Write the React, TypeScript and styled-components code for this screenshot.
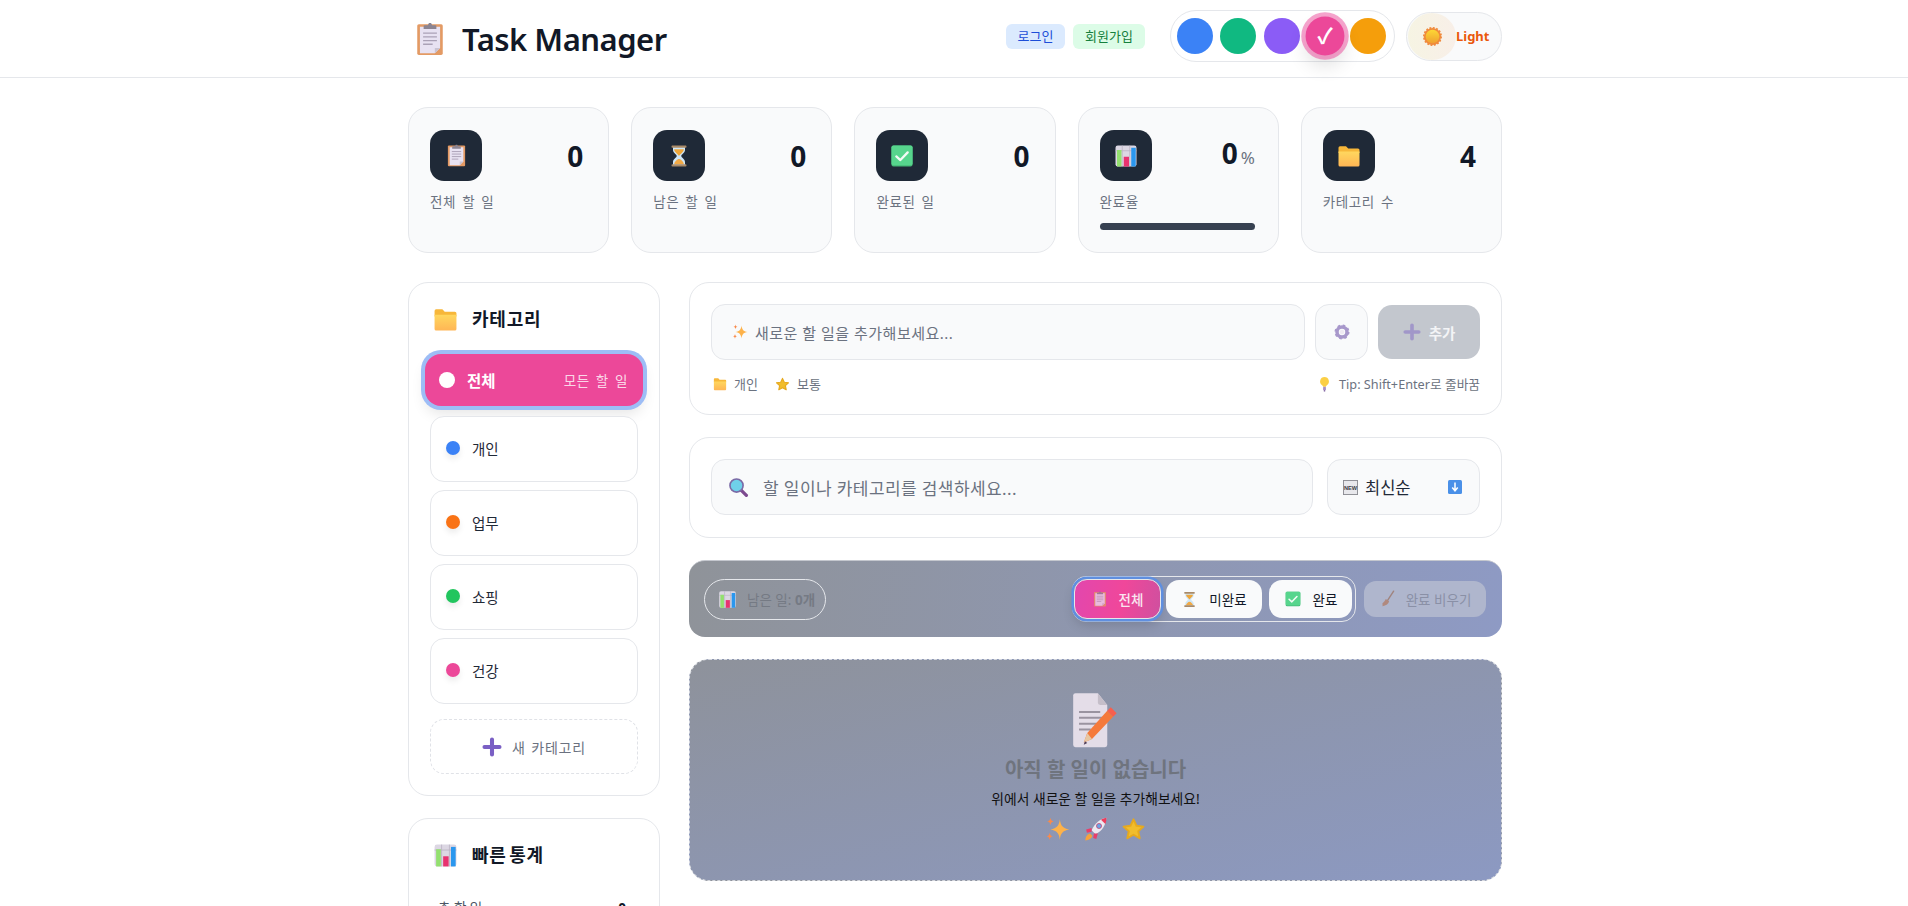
import React from "react";
import styled, { createGlobalStyle } from "styled-components";

const GlobalStyle = createGlobalStyle`
  html, body {
    margin: 0;
    height: 906px;
    overflow: hidden;
    background: #ffffff;
  }
  body {
    font-family: "Noto Sans", "Noto Sans CJK KR", sans-serif;
    color: #111827;
  }
  * { box-sizing: border-box; }
`;

type IconName =
  | "clipboard" | "hourglass" | "check" | "chart" | "folder" | "sun" | "plus" | "gear"
  | "sparkle" | "star" | "bulb" | "search" | "fresh" | "down" | "broom" | "memo" | "rocket";

const shapes: Record<IconName, React.ReactNode> = {
  clipboard: (
    <>
      <rect x="4" y="2" width="24" height="29" rx="1.5" fill="#e39a64" />
      <path d="M6.500 4.500h19v20l-5 5h-14z" fill="#e8e2f2" />
      <path d="M25.500 24.500h-5v5z" fill="#c9c3d2" />
      <path d="M11 3h3l1-2h2l1 2h3a1 1 0 0 1 1 1v2.500H10V4a1 1 0 0 1 1-1z" fill="#8b8492" />
      <path d="M9.500 10.500h13M9.500 14h13M9.500 17.500h13M9.500 21h9" stroke="#aaa1b6" strokeWidth="1.300" />
    </>
  ),
  hourglass: (
    <>
      <path d="M8 4h16v4c0 4-5 6-5 8s5 4 5 8v4H8v-4c0-4 5-6 5-8s-5-4-5-8z" fill="#cfe6f6" />
      <path d="M9.500 7h13c0 4-5 6-6.500 9C14.500 13 9.500 11 9.500 7z" fill="#eea63a" />
      <path d="M16 20c-2.500 0-6 3.500-6.500 7h13c-.5-3.500-4-7-6.500-7z" fill="#f2a945" />
      <rect x="6" y="2" width="20" height="3" rx="1.200" fill="#a98a68" />
      <rect x="6" y="27" width="20" height="3" rx="1.200" fill="#a98a68" />
    </>
  ),
  check: (
    <>
      <rect x="3" y="3" width="26" height="26" rx="2.500" fill="#45b877" />
      <rect x="3" y="3" width="26" height="24.500" rx="2.500" fill="#57d58d" />
      <path d="M9 16.500l5 4.500 9-9.500" fill="none" stroke="#f4fbf6" strokeWidth="2.800" strokeLinecap="round" strokeLinejoin="round" />
    </>
  ),
  chart: (
    <>
      <rect x="2" y="2" width="28" height="28" rx="3" fill="#dcd7e3" />
      <path d="M2 9h28M11 2v28M21 2v28" stroke="#b8b2c2" strokeWidth="1" />
      <rect x="4" y="8" width="6" height="22" fill="#93e06f" />
      <rect x="13" y="17" width="7" height="13" fill="#e8326f" />
      <rect x="23" y="5" width="6" height="25" fill="#2a97ee" />
    </>
  ),
  folder: (
    <>
      <path d="M2 5a2 2 0 0 1 2-2h8l3 3h13a2 2 0 0 1 2 2v4H2z" fill="#f7b73a" />
      <path d="M2 10h28v18a2 2 0 0 1-2 2H4a2 2 0 0 1-2-2z" fill="url(#folderFill)" />
      <defs>
        <linearGradient id="folderFill" x1="0" y1="0" x2="0" y2="1">
          <stop offset="0" stopColor="#ffd75e" />
          <stop offset="1" stopColor="#ffb655" />
        </linearGradient>
      </defs>
    </>
  ),
  sun: (
    <>
      <circle cx="16" cy="16" r="14.500" fill="#f08a3c" strokeDasharray="3.200 2.500" stroke="#f08a3c" strokeWidth="3" />
      <circle cx="16" cy="16" r="11.500" fill="url(#sunFill)" />
      <defs>
        <linearGradient id="sunFill" x1="0" y1="0" x2="0" y2="1">
          <stop offset="0" stopColor="#fdd835" />
          <stop offset="1" stopColor="#efa030" />
        </linearGradient>
      </defs>
    </>
  ),
  plus: (
    <path d="M16 4v24M4 16h24" stroke="#7a5fc4" strokeWidth="6.500" strokeLinecap="round" />
  ),
  gear: (
    <>
      <circle cx="16" cy="16" r="10" fill="none" stroke="#a898cb" strokeWidth="7" />
      <circle cx="16" cy="16" r="13" fill="none" stroke="#a898cb" strokeWidth="4" strokeDasharray="5 5.200" />
      <circle cx="16" cy="16" r="4.500" fill="#efeaf3" />
    </>
  ),
  sparkle: (
    <>
      <path d="M19 3c1 8 3.500 11.500 12 13-8.500 1.500-11 5-12 13-1-8-3.500-11.500-12-13 8.500-1.500 11-5 12-13z" fill="#fdb24a" />
      <path d="M7 1c.5 3 1.500 4.200 4 4.700-2.500.5-3.500 1.700-4 4.700-.5-3-1.500-4.200-4-4.700 2.500-.5 3.500-1.700 4-4.700z" fill="#f98a4b" />
      <path d="M6 20c.5 3 1.500 4.200 4 4.700-2.500.5-3.500 1.700-4 4.700-.5-3-1.500-4.200-4-4.700 2.500-.5 3.500-1.700 4-4.700z" fill="#f98a4b" />
    </>
  ),
  star: (
    <path
      d="M16 3l3.800 8.200 8.900 1.100-6.600 6 1.800 8.900L16 22.700l-7.900 4.500 1.800-8.900-6.600-6 8.900-1.100z"
      fill="#f1bd2c"
      stroke="#e6a91f"
      strokeWidth="2.500"
      strokeLinejoin="round"
    />
  ),
  bulb: (
    <>
      <path d="M16 0a9.500 9.500 0 0 0-5 17.500c1.200 1 1.800 2 2 3.500h6c.2-1.500.8-2.500 2-3.500A9.500 9.500 0 0 0 16 0z" fill="#fbcf45" />
      <rect x="13" y="21" width="6" height="7" rx="1" fill="#a98fc6" />
      <rect x="14.500" y="28" width="3" height="3" fill="#7c5f9e" />
    </>
  ),
  search: (
    <>
      <path d="M20 20l8 8" stroke="#7d4a8f" strokeWidth="5" strokeLinecap="round" />
      <circle cx="13" cy="13" r="10" fill="#6fd0ea" stroke="#7b6aa6" strokeWidth="2.500" />
    </>
  ),
  fresh: (
    <>
      <rect x="1" y="1" width="30" height="30" fill="#e8e8ec" stroke="#8b8b92" strokeWidth="2" />
      <text x="16" y="21" textAnchor="middle" fontFamily="Liberation Sans, sans-serif" fontSize="12" fontWeight="700" fill="#3b3b44">NEW</text>
    </>
  ),
  down: (
    <>
      <rect x="2" y="2" width="28" height="28" rx="3" fill="#4a90e8" />
      <path d="M16 7v15M10.500 17l5.500 6.500 5.500-6.500" fill="none" stroke="#ffffff" strokeWidth="3" />
    </>
  ),
  broom: (
    <>
      <path d="M26 2L15 19" stroke="#9b7466" strokeWidth="2.500" strokeLinecap="round" />
      <path d="M12 16l6 4c-1 4-5 8-12 9 1-2 0-3 0-5 2-2 5-5 6-8z" fill="#b17a64" />
    </>
  ),
  memo: (
    <>
      <path d="M1 3a2 2 0 0 1 2-2h19l8 10v34a2 2 0 0 1-2 2H3a2 2 0 0 1-2-2z" fill="#e4dde8" />
      <path d="M22 1l8 10h-6a2 2 0 0 1-2-2z" fill="#c5bec9" />
      <path d="M6 17h18M6 22h20M6 27h17M6 32h10" stroke="#9a93a0" strokeWidth="1.700" />
      <path d="M10 43l3-8 17-19 5 5-18 19z" fill="#f5793b" />
      <path d="M30 16l3-3 5 5-3 3z" fill="#f85f4d" />
      <path d="M10 43l3-8 4 5z" fill="#e7c7a3" />
      <path d="M10 45l1-3 2 1.500z" fill="#4d3a55" />
    </>
  ),
  rocket: (
    <>
      <path d="M30 1c-8 1-15 7-19 16l5 5c9-4 13-12 14-21z" fill="#ece8f0" />
      <path d="M30 1c-2.500.3-5 1.200-7 2.400l5.600 5.400C29.600 6.500 30 3.800 30 1z" fill="#ec3e5e" />
      <circle cx="20.500" cy="11.500" r="3.200" fill="#6aa6e8" stroke="#c83e6a" strokeWidth="1" />
      <path d="M11 14l-7 2 1 4 6-1zM19 21l-2 7-4-1 1-6z" fill="#e83e6a" />
      <path d="M9 21c-4 1-6 4.500-6 9 4.500 0 8-2.500 9-6z" fill="#f7a23c" />
    </>
  ),
};

const Icon = ({ name, size }: { name: IconName; size: number }) => {
  const tall = name === "memo";
  return (
    <IconSvg
      viewBox={tall ? "0 0 40 48" : "0 0 32 32"}
      width={size}
      height={tall ? (size * 48) / 40 : size}
    >
      {shapes[name]}
    </IconSvg>
  );
};

const IconSvg = styled.svg`
  display: block;
  flex: none;
`;

const Page = styled.div`
  width: 100%;
`;

const TopBar = styled.header`
  height: 78px;
  border-bottom: 1px solid #e5e7eb;
  background: #ffffff;
`;

const Wrap = styled.div`
  width: 1096px;
  margin: 0 auto;
  padding-left: 2px;
`;

const TopRow = styled(Wrap)`
  height: 72px;
  display: flex;
  align-items: center;
`;

const Brand = styled.div`
  display: flex;
  align-items: center;
  gap: 15px;
  padding: 5px 0 0 5px;
  flex: 1;
`;

const BrandTitle = styled.h1`
  margin: 0;
  font-size: 31px;
  line-height: 40px;
  font-weight: 600;
  color: #111827;
  letter-spacing: -0.5px;
`;

const AuthTag = styled.span<{ $bg: string; $fg: string; $width: number }>`
  width: ${(p) => p.$width}px;
  height: 25px;
  margin-right: 8px;
  border-radius: 6px;
  background: ${(p) => p.$bg};
  color: ${(p) => p.$fg};
  font-size: 13px;
  line-height: 25px;
  text-align: center;
`;

const Palette = styled.div`
  width: 225px;
  height: 52px;
  margin-left: 17px;
  padding: 0 6px;
  display: flex;
  align-items: center;
  gap: 7.25px;
  border: 1px solid #e5e7eb;
  border-radius: 26px;
`;

const Swatch = styled.div<{ $color: string; $active?: boolean }>`
  width: 36px;
  height: 36px;
  flex: none;
  border-radius: 50%;
  background: ${(p) => p.$color};
  color: #ffffff;
  display: flex;
  align-items: center;
  justify-content: center;
  font-size: 20px;
  font-weight: 700;
  line-height: 1;
  ${(p) =>
    p.$active &&
    `
    transform: scale(1.08);
    box-shadow: 0 0 0 4px rgba(236, 72, 153, 0.5), 0 10px 18px rgba(0, 0, 0, 0.12);
  `}
`;

const Toggle = styled.div`
  width: 96px;
  height: 49px;
  margin-left: 11px;
  display: flex;
  align-items: center;
  border: 1px solid #e5e7eb;
  border-radius: 25px;
  background: #f9fafb;
  color: #ea580c;
  font-size: 13px;
  font-weight: 700;
`;

const ToggleKnob = styled.div`
  width: 48px;
  height: 47px;
  margin-left: 1px;
  display: flex;
  align-items: center;
  justify-content: center;
  border-radius: 50%;
  background: linear-gradient(90deg, #f6f4e3, #f8efe8);
`;

const StatGrid = styled.div`
  display: grid;
  grid-template-columns: repeat(5, 1fr);
  gap: 22px;
  margin-top: 29px;
`;

const StatCard = styled.div`
  height: 146px;
  padding: 22px 25px 0 21px;
  border: 1px solid #e5e7eb;
  border-radius: 20px;
  background: #f9fafb;
`;

const StatTop = styled.div`
  display: flex;
  align-items: center;
  justify-content: space-between;
`;

const StatIcon = styled.div`
  width: 52px;
  height: 51px;
  display: flex;
  align-items: center;
  justify-content: center;
  border-radius: 14px;
  background: #1f2937;
`;

const StatValue = styled.div`
  font-size: 28px;
  line-height: 36px;
  font-weight: 700;
  color: #111827;
`;

const PercentValue = styled(StatValue)`
  margin-right: -2px;
`;

const StatUnit = styled.span`
  margin-left: 3px;
  font-size: 17px;
  font-weight: 400;
  color: #6b7280;
`;

const StatLabel = styled.div`
  margin-top: 11px;
  font-size: 13.5px;
  line-height: 20px;
  letter-spacing: 0.6px;
  word-spacing: 2px;
  color: #6b7280;
`;

const ProgressTrack = styled.div`
  height: 7px;
  margin: 11px -2px 0 0;
  border-radius: 4px;
  background: #374151;
`;

const Columns = styled.div`
  display: grid;
  grid-template-columns: 252px 813px;
  gap: 29px;
  margin-top: 29px;
`;

const SideColumn = styled.aside`
  display: flex;
  flex-direction: column;
  gap: 22px;
`;

const MainColumn = styled.main`
  display: flex;
  flex-direction: column;
  gap: 22px;
`;

const Panel = styled.section`
  padding: 21px;
  border: 1px solid #e5e7eb;
  border-radius: 20px;
  background: #ffffff;
`;

const PanelTitle = styled.h3<{ $gap: number }>`
  height: 30px;
  margin: 0 0 ${(p) => p.$gap}px;
  padding-left: 3px;
  display: flex;
  align-items: center;
  gap: 14px;
  font-size: 18px;
  font-weight: 700;
  line-height: 28px;
  letter-spacing: 0.8px;
  word-spacing: -3px;
  color: #111827;
`;

const ActiveCategory = styled.div`
  height: 52px;
  margin: 0 -5px 10px;
  padding: 0 15px 0 14px;
  display: flex;
  align-items: center;
  border-radius: 16px;
  background: #ec4899;
  color: #ffffff;
  box-shadow: 0 0 0 4px #9dbdf6, 0 8px 14px rgba(0, 0, 0, 0.1);
`;

const ActiveDot = styled.span`
  width: 16px;
  height: 16px;
  margin-right: 12px;
  border-radius: 50%;
  background: #ffffff;
`;

const ActiveName = styled.span`
  flex: 1;
  font-size: 15.5px;
  font-weight: 600;
`;

const ActiveHint = styled.span`
  font-size: 13.5px;
  letter-spacing: 0.6px;
  word-spacing: 2px;
  color: rgba(255, 255, 255, 0.8);
`;

const CategoryList = styled.div`
  display: flex;
  flex-direction: column;
  gap: 8px;
`;

const CategoryRow = styled.div`
  height: 66px;
  padding: 0 15px 2px;
  display: flex;
  align-items: center;
  gap: 12px;
  border: 1px solid #e5e7eb;
  border-radius: 14px;
  background: #ffffff;
  font-size: 14.5px;
  color: #1f2937;
`;

const Dot = styled.span<{ $color: string }>`
  width: 14px;
  height: 14px;
  border-radius: 50%;
  background: ${(p) => p.$color};
  box-shadow: 0 4px 6px rgba(0, 0, 0, 0.08);
`;

const AddCategory = styled.div`
  height: 55px;
  margin-top: 15px;
  display: flex;
  align-items: center;
  justify-content: center;
  gap: 10px;
  border: 1px dashed #e0e2e7;
  border-radius: 14px;
  font-size: 14px;
  letter-spacing: 0.8px;
  word-spacing: 1px;
  color: #6b7280;
`;

const QuickRow = styled.div`
  margin-top: 28px;
  padding: 0 12px 0 8px;
  display: flex;
  justify-content: space-between;
  font-size: 13.5px;
  line-height: 20px;
  color: #4b5563;
`;

const QuickValue = styled.span`
  font-weight: 700;
  color: #111827;
`;

const AddPanel = styled(Panel)`
  height: 133px;
`;

const InputRow = styled.div`
  display: flex;
  align-items: center;
  gap: 10px;
`;

const Field = styled.div<{ $gap: number; $pad: number; $size: number; $track: number }>`
  height: 56px;
  flex: 1;
  padding-left: ${(p) => p.$pad}px;
  display: flex;
  align-items: center;
  gap: ${(p) => p.$gap}px;
  border: 1px solid #e5e7eb;
  border-radius: 14px;
  background: #f9fafb;
  font-size: ${(p) => p.$size}px;
  letter-spacing: ${(p) => p.$track}px;
  color: #6b7280;
`;

const GearButton = styled.div`
  width: 53px;
  height: 56px;
  display: flex;
  align-items: center;
  justify-content: center;
  border: 1px solid #e5e7eb;
  border-radius: 14px;
  background: #f9fafb;
`;

const AddButton = styled.div`
  width: 102px;
  height: 54px;
  display: flex;
  align-items: center;
  justify-content: center;
  gap: 8px;
  border-radius: 14px;
  background: #c3c7ce;
  color: #f3f4f6;
  font-size: 14.5px;
  font-weight: 700;
`;

const MetaRow = styled.div`
  margin-top: 14px;
  padding-left: 2px;
  display: flex;
  align-items: center;
  gap: 7px;
  font-size: 13px;
  line-height: 20px;
  color: #6b7280;
`;

const MetaSpacer = styled.span<{ $grow?: boolean }>`
  width: 3px;
  flex: ${(p) => (p.$grow ? 1 : "none")};
`;

const TipText = styled.span`
  font-size: 12.7px;
`;

const SearchPanel = styled(Panel)`
  height: 101px;
  display: flex;
  gap: 14px;
`;

const SortBox = styled.div`
  width: 153px;
  height: 56px;
  padding: 0 16px 0 15px;
  display: flex;
  align-items: center;
  gap: 7px;
  border: 1px solid #e5e7eb;
  border-radius: 14px;
  background: #f9fafb;
  font-size: 16.5px;
  color: #1f2937;
`;

const SortName = styled.span`
  flex: 1;
`;

const FilterBar = styled.div`
  height: 77px;
  padding: 0 16px 0 15px;
  display: flex;
  align-items: center;
  border-radius: 16px;
  border-top: 1px solid #c4c7ce;
  background: linear-gradient(100deg, #8f9399, #8e9ac4);
`;

const RemainPill = styled.div`
  width: 122px;
  height: 41px;
  padding-left: 13px;
  display: flex;
  align-items: center;
  gap: 10px;
  border: 1.5px solid #e5e7eb;
  border-radius: 21px;
  font-size: 13.5px;
  color: #757a84;
`;

const RemainCount = styled.b`
  font-weight: 700;
`;

const FilterGroup = styled.div`
  height: 46px;
  margin-left: auto;
  padding: 3px;
  display: flex;
  align-items: center;
  gap: 7px;
  border: 1px solid #e5e7eb;
  border-radius: 14px;
`;

const FilterButton = styled.div<{ $width: number }>`
  width: ${(p) => p.$width}px;
  height: 38px;
  display: flex;
  align-items: center;
  justify-content: center;
  gap: 11px;
  border-radius: 13px;
  background: #f9fafb;
  font-size: 13.5px;
  color: #111827;
`;

const FilterActive = styled(FilterButton)`
  height: 40px;
  margin: 0 -2px;
  border: 1.5px solid #e5e7eb;
  background: linear-gradient(100deg, #e247ae, #f0479a 55%, #cf509f);
  color: #f9e6f0;
  font-weight: 500;
  box-shadow: 0 0 0 2.5px #5f8fe0, 0 6px 12px rgba(0, 0, 0, 0.15);
`;

const Faded = styled.span<{ $amount: number }>`
  display: block;
  opacity: ${(p) => p.$amount};
`;

const ClearButton = styled.div`
  width: 122px;
  height: 36px;
  margin-left: 8px;
  display: flex;
  align-items: center;
  justify-content: center;
  gap: 9px;
  border-radius: 12px;
  background: #afb6cd;
  font-size: 13.5px;
  color: #8a90a6;
`;

const EmptyBox = styled.div`
  height: 222px;
  padding-top: 32px;
  display: flex;
  flex-direction: column;
  align-items: center;
  border: 1.5px dashed #d3d6dc;
  border-radius: 20px;
  background: linear-gradient(165deg, #8e929b, #8c99c2);
`;

const EmptyTitle = styled.h3`
  margin: 8px 0 0;
  font-size: 20px;
  line-height: 28px;
  font-weight: 700;
  color: #6f747e;
`;

const EmptyText = styled.p`
  margin: 5px 0 0;
  font-size: 13.8px;
  line-height: 20px;
  color: #111111;
`;

const EmptyIcons = styled.div`
  margin-top: 8px;
  display: flex;
  gap: 13px;
`;

const categories = [
  { name: "개인", color: "#3b82f6" },
  { name: "업무", color: "#f97316" },
  { name: "쇼핑", color: "#22c55e" },
  { name: "건강", color: "#ec4899" },
];

const swatches = ["#3b82f6", "#10b981", "#8b5cf6", "#ec4899", "#f59e0b"];

const stats: { icon: IconName; value: string; label: string; size: number }[] = [
  { icon: "clipboard", value: "0", label: "전체 할 일", size: 23 },
  { icon: "hourglass", value: "0", label: "남은 할 일", size: 24 },
  { icon: "check", value: "0", label: "완료된 일", size: 26 },
];

const App = () => (
  <Page>
    <GlobalStyle />
    <TopBar>
      <TopRow>
        <Brand>
          <Icon name="clipboard" size={34} />
          <BrandTitle>Task Manager</BrandTitle>
        </Brand>
        <AuthTag $bg="#dbeafe" $fg="#1d4ed8" $width={59}>로그인</AuthTag>
        <AuthTag $bg="#dcfce7" $fg="#15803d" $width={72}>회원가입</AuthTag>
        <Palette>
          {swatches.map((color, i) => (
            <Swatch key={color} $color={color} $active={i === 3}>
              {i === 3 && "✓"}
            </Swatch>
          ))}
        </Palette>
        <Toggle>
          <ToggleKnob>
            <Icon name="sun" size={19} />
          </ToggleKnob>
          Light
        </Toggle>
      </TopRow>
    </TopBar>
    <Wrap>
      <StatGrid>
        {stats.map((s) => (
          <StatCard key={s.label}>
            <StatTop>
              <StatIcon><Icon name={s.icon} size={s.size} /></StatIcon>
              <StatValue>{s.value}</StatValue>
            </StatTop>
            <StatLabel>{s.label}</StatLabel>
          </StatCard>
        ))}
        <StatCard>
          <StatTop>
            <StatIcon><Icon name="chart" size={24} /></StatIcon>
            <PercentValue>0<StatUnit>%</StatUnit></PercentValue>
          </StatTop>
          <StatLabel>완료율</StatLabel>
          <ProgressTrack />
        </StatCard>
        <StatCard>
          <StatTop>
            <StatIcon><Icon name="folder" size={24} /></StatIcon>
            <StatValue>4</StatValue>
          </StatTop>
          <StatLabel>카테고리 수</StatLabel>
        </StatCard>
      </StatGrid>
      <Columns>
        <SideColumn>
          <Panel>
            <PanelTitle $gap={20}>
              <Icon name="folder" size={25} />
              카테고리
            </PanelTitle>
            <ActiveCategory>
              <ActiveDot />
              <ActiveName>전체</ActiveName>
              <ActiveHint>모든 할 일</ActiveHint>
            </ActiveCategory>
            <CategoryList>
              {categories.map((c) => (
                <CategoryRow key={c.name}>
                  <Dot $color={c.color} />
                  {c.name}
                </CategoryRow>
              ))}
            </CategoryList>
            <AddCategory>
              <Icon name="plus" size={20} />
              새 카테고리
            </AddCategory>
          </Panel>
          <Panel>
            <PanelTitle $gap={0}>
              <Icon name="chart" size={25} />
              빠른 통계
            </PanelTitle>
            <QuickRow>
              <span>총 할 일</span>
              <QuickValue>0</QuickValue>
            </QuickRow>
            <QuickRow>
              <span>완료</span>
              <QuickValue>0</QuickValue>
            </QuickRow>
          </Panel>
        </SideColumn>
        <MainColumn>
          <AddPanel>
            <InputRow>
              <Field $gap={7} $pad={20} $size={15} $track={0.5}>
                <Icon name="sparkle" size={16} />
                새로운 할 일을 추가해보세요...
              </Field>
              <GearButton><Icon name="gear" size={16} /></GearButton>
              <AddButton>
                <Faded $amount={0.45}><Icon name="plus" size={18} /></Faded>
                추가
              </AddButton>
            </InputRow>
            <MetaRow>
              <Icon name="folder" size={14} />
              개인
              <MetaSpacer />
              <Icon name="star" size={15} />
              보통
              <MetaSpacer $grow />
              <Icon name="bulb" size={15} />
              <TipText>Tip: Shift+Enter로 줄바꿈</TipText>
            </MetaRow>
          </AddPanel>
          <SearchPanel>
            <Field $gap={14} $pad={16} $size={17} $track={0.4}>
              <Icon name="search" size={21} />
              할 일이나 카테고리를 검색하세요...
            </Field>
            <SortBox>
              <Icon name="fresh" size={15} />
              <SortName>최신순</SortName>
              <Icon name="down" size={16} />
            </SortBox>
          </SearchPanel>
          <FilterBar>
            <RemainPill>
              <Icon name="chart" size={19} />
              <span>남은 일: <RemainCount>0개</RemainCount></span>
            </RemainPill>
            <FilterGroup>
              <FilterActive $width={87}>
                <Faded $amount={0.75}><Icon name="clipboard" size={16} /></Faded>
                전체
              </FilterActive>
              <FilterButton $width={96}>
                <Icon name="hourglass" size={17} />
                미완료
              </FilterButton>
              <FilterButton $width={83}>
                <Icon name="check" size={18} />
                완료
              </FilterButton>
            </FilterGroup>
            <ClearButton>
              <Faded $amount={0.75}><Icon name="broom" size={18} /></Faded>
              완료 비우기
            </ClearButton>
          </FilterBar>
          <EmptyBox>
            <Icon name="memo" size={47} />
            <EmptyTitle>아직 할 일이 없습니다</EmptyTitle>
            <EmptyText>위에서 새로운 할 일을 추가해보세요!</EmptyText>
            <EmptyIcons>
              <Icon name="sparkle" size={25} />
              <Icon name="rocket" size={25} />
              <Icon name="star" size={25} />
            </EmptyIcons>
          </EmptyBox>
        </MainColumn>
      </Columns>
    </Wrap>
  </Page>
);

export default App;
